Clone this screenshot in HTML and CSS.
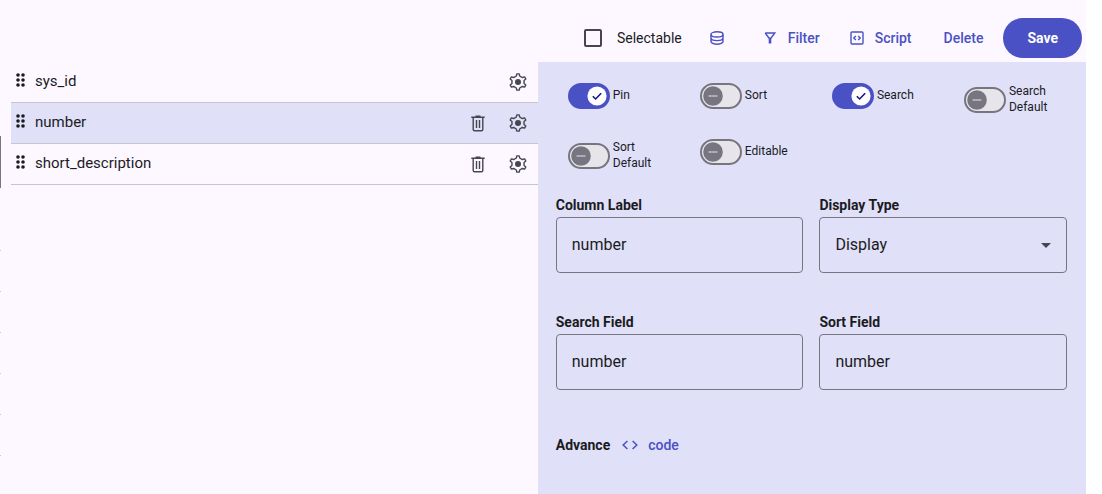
FILE: index.html
```
<!DOCTYPE html>
<html lang="en">
<head>
<meta charset="utf-8">
<title>Column settings</title>
<link rel="stylesheet" href="styles.css">
</head>
<body>
<svg class="sprite" aria-hidden="true">
  <symbol id="drag" viewBox="0 0 10 14">
    <g fill="currentColor"><circle cx="2" cy="2" r="1.8"/><circle cx="7" cy="2" r="1.8"/><circle cx="2" cy="7" r="1.8"/><circle cx="7" cy="7" r="1.8"/><circle cx="2" cy="12" r="1.8"/><circle cx="7" cy="12" r="1.8"/></g>
  </symbol>
  <symbol id="gear" viewBox="-9 -9 18 18">
    <path d="M-1.2 -8.1H1.2L1.7 -6L4.35 -4.47L6.6 -5.1L7.8 -3L6.05 -1.53V1.53L7.8 3L6.6 5.1L4.35 4.47L1.7 6L1.2 8.1H-1.2L-1.7 6L-4.35 4.47L-6.6 5.1L-7.8 3L-6.05 1.53V-1.53L-7.8 -3L-6.6 -5.1L-4.35 -4.47L-1.7 -6Z" fill="none" stroke="currentColor" stroke-width="1.4" stroke-linejoin="round"/>
    <circle r="3" fill="currentColor"/>
  </symbol>
  <symbol id="trash" viewBox="0 0 14 17">
    <path d="M.3 2.2H13.7M4.5 1.2H9.5M2.2 2.5V14.4Q2.2 15.8 3.6 15.8H10.4Q11.8 15.8 11.8 14.4V2.5M5.5 5V13M8.5 5V13" fill="none" stroke="currentColor" stroke-width="1.4"/>
  </symbol>
  <symbol id="check" viewBox="0 0 42 26">
    <circle cx="29" cy="13" r="9.6" fill="#fff"/><path d="M24.8 13.2L27.6 16L33.2 10.2" fill="none" stroke="#12127a" stroke-width="1.5"/>
  </symbol>
  <symbol id="minus" viewBox="0 0 42 26">
    <circle cx="13" cy="13" r="9.8" fill="#777680"/><path d="M8.5 13H17.5" stroke="#b9b7bf" stroke-width="1.7"/>
  </symbol>
</svg>
<div class="app">
  <div class="edge" aria-hidden="true">
    <span class="thumb"></span>
    <span class="tick"></span><span class="tick"></span><span class="tick"></span><span class="tick"></span><span class="tick"></span><span class="tick"></span>
  </div>
  <main class="main">
    <header class="toolbar">
      <label class="selectable"><input type="checkbox" class="box">Selectable</label>
      <button class="btn btn-data" type="button" aria-label="Data source">
        <svg width="14" height="14" viewBox="0 0 14 14" fill="none" stroke="currentColor" stroke-width="1.4"><ellipse cx="7" cy="3.4" rx="6" ry="2.6"/><path d="M1 3.4V10.6C1 12 3.7 13.3 7 13.3S13 12 13 10.6V3.4M1 7C1 8.4 3.7 9.6 7 9.6S13 8.4 13 7"/></svg>
      </button>
      <button class="btn btn-filter" type="button">
        <svg width="12" height="12" viewBox="0 0 12 12" fill="none" stroke="currentColor" stroke-width="1.4"><path d="M1.2 1H10.8L6.9 6.2H5.1L1.2 1M5.4 6V11.5M6.6 6V11.5"/></svg>Filter
      </button>
      <button class="btn btn-script" type="button">
        <svg width="14" height="14" viewBox="0 0 14 14" fill="none" stroke="currentColor" stroke-width="1.4"><rect x="1" y="1" width="12" height="12" rx="1"/><path d="M5.8 4.9L3.8 7L5.8 9.1M8.2 4.9L10.2 7L8.2 9.1"/></svg>Script
      </button>
      <button class="btn btn-delete" type="button">Delete</button>
      <button class="btn btn-save" type="button">Save</button>
    </header>
    <div class="columns">
      <ul class="list">
        <li class="row">
          <svg class="drag" width="10" height="14"><use href="#drag"/></svg>
          <span class="name">sys_id</span>
          <button class="icon-btn" type="button" aria-label="Settings for sys_id"><svg width="18" height="18"><use href="#gear"/></svg></button>
        </li>
        <li class="row selected">
          <svg class="drag" width="10" height="14"><use href="#drag"/></svg>
          <span class="name">number</span>
          <button class="icon-btn" type="button" aria-label="Remove number"><svg width="14" height="17"><use href="#trash"/></svg></button>
          <button class="icon-btn" type="button" aria-label="Settings for number"><svg width="18" height="18"><use href="#gear"/></svg></button>
        </li>
        <li class="row">
          <svg class="drag" width="10" height="14"><use href="#drag"/></svg>
          <span class="name">short_description</span>
          <button class="icon-btn" type="button" aria-label="Remove short_description"><svg width="14" height="17"><use href="#trash"/></svg></button>
          <button class="icon-btn" type="button" aria-label="Settings for short_description"><svg width="18" height="18"><use href="#gear"/></svg></button>
        </li>
      </ul>
      <section class="panel">
        <div class="toggles">
          <label class="toggle"><span class="switch"><input type="checkbox" role="switch" checked><svg width="42" height="26"><use href="#check"/></svg></span><span class="toggle-text">Pin</span></label>
          <label class="toggle"><span class="switch"><input type="checkbox" role="switch"><svg width="42" height="26"><use href="#minus"/></svg></span><span class="toggle-text">Sort</span></label>
          <label class="toggle"><span class="switch"><input type="checkbox" role="switch" checked><svg width="42" height="26"><use href="#check"/></svg></span><span class="toggle-text">Search</span></label>
          <label class="toggle"><span class="switch"><input type="checkbox" role="switch"><svg width="42" height="26"><use href="#minus"/></svg></span><span class="toggle-text">Search Default</span></label>
          <label class="toggle"><span class="switch"><input type="checkbox" role="switch"><svg width="42" height="26"><use href="#minus"/></svg></span><span class="toggle-text">Sort Default</span></label>
          <label class="toggle"><span class="switch"><input type="checkbox" role="switch"><svg width="42" height="26"><use href="#minus"/></svg></span><span class="toggle-text">Editable</span></label>
        </div>
        <div class="fields">
          <div class="field"><label for="column-label">Column Label</label><input class="control" id="column-label" type="text" value="number"></div>
          <div class="field"><label for="display-type">Display Type</label>
            <div class="select-wrap">
              <select class="control" id="display-type"><option>Display</option></select>
              <svg class="arrow" width="10" height="5" viewBox="0 0 10 5"><path d="M0 0H10L5 5Z" fill="currentColor"/></svg>
            </div>
          </div>
          <div class="field"><label for="search-field">Search Field</label><input class="control" id="search-field" type="text" value="number"></div>
          <div class="field"><label for="sort-field">Sort Field</label><input class="control" id="sort-field" type="text" value="number"></div>
        </div>
        <div class="advance">
          <span class="advance-label">Advance</span>
          <button class="btn btn-code" type="button"><svg width="16" height="10" viewBox="0 0 16 10" fill="none" stroke="currentColor" stroke-width="1.5"><path d="M5.4 1L1.2 5L5.4 9M10.6 1L14.8 5L10.6 9"/></svg>code</button>
        </div>
      </section>
    </div>
  </main>
</div>
</body>
</html>
```
FILE: styles.css
```
:root {
  --primary: #4a51c4;
  --surface: #fdf8ff;
  --tint: #e0e0f8;
  --text: #1b1b1f;
  --muted: #46464f;
  --outline: #777680;
  --line: #c7c5d0;
}
* { box-sizing: border-box; }
body {
  margin: 0;
  background: #fff;
  color: var(--text);
  font: 14px/20px Roboto, sans-serif;
}
button, input, select { font: inherit; color: inherit; margin: 0; }
svg { display: block; flex: none; }
.sprite { display: none; }

.app {
  display: grid;
  grid-template-columns: 11px 1fr;
  min-height: 100vh;
  margin-right: 16px;
  background: var(--surface);
}
.edge { display: flex; flex-direction: column; padding-top: 136px; }
.thumb { width: 1px; height: 52px; margin-bottom: 22px; background: var(--outline); }
.tick { width: 1px; height: 41px; border-bottom: 1px solid var(--line); }

.main { display: flex; flex-direction: column; }
.toolbar {
  display: flex;
  align-items: center;
  justify-content: flex-end;
  padding: 18px 4px 4px 0;
}
.selectable { display: flex; align-items: center; gap: 15px; }
.box {
  appearance: none;
  width: 18px;
  height: 18px;
  border: 2px solid var(--muted);
  border-radius: 2px;
}
.btn {
  display: flex;
  align-items: center;
  height: 40px;
  padding: 0 12px 1px;
  border: 0;
  border-radius: 20px;
  background: none;
  color: var(--primary);
  font-weight: 500;
  cursor: pointer;
}
.btn-data { padding: 0 24px 0 28px; }
.btn-filter { gap: 12px; padding: 0 14px 1px 16px; }
.btn-script { gap: 11px; padding: 0 16px 1px; }
.btn-delete { padding: 0 20px 1px 16px; }
.btn-save { padding: 0 24px 1px; background: var(--primary); color: #fff; font-weight: 700; }

.columns { display: grid; grid-template-columns: 49fr 51fr; flex: 1; }
.list { margin: 0; padding: 0; list-style: none; }
.row {
  display: flex;
  align-items: center;
  height: 41px;
  padding-left: 5px;
  border-bottom: 1px solid var(--line);
}
.selected { background: var(--tint); }
.drag { margin-bottom: 4px; color: var(--text); }
.name { flex: 1; padding: 0 0 2px 9px; font-size: 15px; }
.icon-btn {
  display: grid;
  place-items: center;
  width: 40px;
  height: 40px;
  padding: 0;
  border: 0;
  background: none;
  color: var(--muted);
}

.panel { padding: 21px 19px 29px 18px; background: var(--tint); }
.toggles {
  display: grid;
  grid-template-columns: repeat(4, 1fr);
  gap: 22px;
  margin: 0 -7px 24px 12px;
  font-size: 12px;
  line-height: 16px;
}
.toggle { display: flex; align-items: center; align-self: start; gap: 3px; padding-right: 4px; }
.toggle-text { padding-bottom: 2px; }
.switch { display: grid; flex: none; }
.switch > * { grid-area: 1 / 1; }
.switch svg { pointer-events: none; }
.switch input {
  appearance: none;
  width: 42px;
  height: 26px;
  border: 2px solid var(--outline);
  border-radius: 13px;
  background: #e8e5ea;
}
.switch input:checked { border-color: var(--primary); background: var(--primary); }

.fields { display: grid; grid-template-columns: 1fr 1fr; gap: 41px 16px; }
.field { display: flex; flex-direction: column; gap: 4px; min-width: 0; }
.field label, .advance-label { font-size: 14px; line-height: 16px; font-weight: 700; }
.control {
  appearance: none;
  width: 100%;
  height: 56px;
  padding: 0 15px 2px;
  border: 1px solid var(--outline);
  border-radius: 4px;
  background: transparent;
  font-size: 16px;
}
select.control { padding-bottom: 0; }
.select-wrap { display: grid; align-items: center; }
.select-wrap > * { grid-area: 1 / 1; }
.arrow { justify-self: end; margin-right: 16px; color: var(--muted); pointer-events: none; }
.advance { display: flex; align-items: center; margin-top: 35px; }
.btn-code { gap: 10px; }
```
